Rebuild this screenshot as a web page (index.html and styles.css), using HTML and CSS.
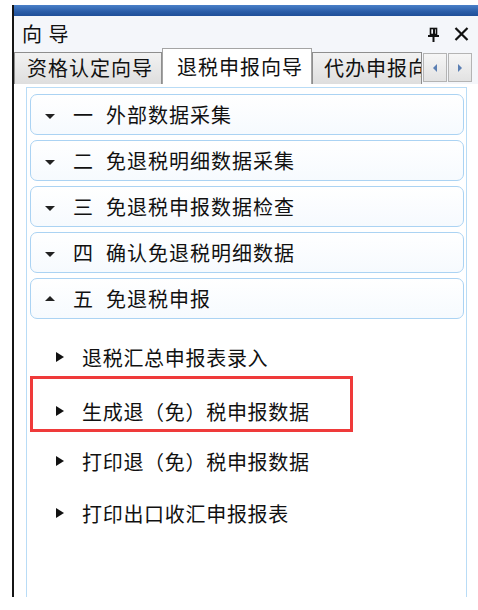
FILE: index.html
```html
<!DOCTYPE html>
<html lang="zh-CN">

<head>
    <meta charset="UTF-8">
    <title>向导</title>
    <link rel="stylesheet" href="styles.css">
</head>

<body>

    <div class="frame">
        <div class="titlebar"></div>

        <div class="header">
            <span class="title">向 导</span>
            <span class="tools">
                <svg class="pin" width="11" height="15" viewBox="0 0 11 15">
                    <rect x="2.5" y="1.5" width="6" height="6" fill="none" stroke="#111" stroke-width="1.6"/>
                    <rect x="5" y="2" width="2" height="5" fill="#111"/>
                    <rect x="0" y="8" width="11" height="2" fill="#111"/>
                    <rect x="4.5" y="10" width="2" height="5" fill="#111"/>
                </svg>
                <svg class="close" width="15" height="14" viewBox="0 0 15 14">
                    <path d="M1.5 1 L13.5 13 M13.5 1 L1.5 13" stroke="#111" stroke-width="2.2"/>
                </svg>
            </span>
        </div>

        <div class="tabs">
            <div class="tab">资格认定向导</div>
            <div class="tab active">退税申报向导</div>
            <div class="tab clipped">代办申报向导</div>
            <div class="scroll-btn"><span class="arrow left"></span></div>
            <div class="scroll-btn"><span class="arrow right"></span></div>
        </div>

        <div class="panel">
            <div class="panel-inner">
                <div class="group"><span class="caret down"></span><span class="num">一</span><span class="label">外部数据采集</span></div>
                <div class="group"><span class="caret down"></span><span class="num">二</span><span class="label">免退税明细数据采集</span></div>
                <div class="group"><span class="caret down"></span><span class="num">三</span><span class="label">免退税申报数据检查</span></div>
                <div class="group"><span class="caret down"></span><span class="num">四</span><span class="label">确认免退税明细数据</span></div>
                <div class="group"><span class="caret up"></span><span class="num">五</span><span class="label">免退税申报</span></div>

                <ul class="items">
                    <li class="item"><span class="bullet"></span>退税汇总申报表录入</li>
                    <li class="item marked"><span class="bullet"></span>生成退（免）税申报数据</li>
                    <li class="item"><span class="bullet"></span>打印退（免）税申报数据</li>
                    <li class="item"><span class="bullet"></span>打印出口收汇申报报表</li>
                </ul>
            </div>
        </div>
    </div>

</body>

</html>
```

FILE: styles.css
```css
body {
    margin: 0;
    padding-top: 5px;
    background-color: #fff;
    font-family: "Noto Sans CJK SC", "Noto Sans", sans-serif;
    color: #111;
    overflow: hidden;
}

.frame {
    margin-left: 12px;
    border-left: 2px solid #151515;
    height: 592px;
    display: flex;
    flex-direction: column;
}

.titlebar {
    height: 11px;
    background: linear-gradient(#4a80c8, #2a5da8 60%, #1f4f98);
}

.header {
    height: 32px;
    background-color: #f4f6fa;
    display: flex;
    align-items: center;
    justify-content: space-between;
    padding: 0 9px 0 8px;
}

.title {
    font-size: 20px;
    letter-spacing: 1px;
    line-height: 1;
    margin-top: 4px;
}

.tools {
    display: flex;
    align-items: center;
    gap: 15px;
    margin-top: 4px;
}

.tabs {
    height: 36px;
    background-color: #f4f6fa;
    display: flex;
    align-items: flex-end;
    font-size: 20px;
    letter-spacing: 1px;
}

.tab {
    box-sizing: border-box;
    height: 32px;
    width: 148px;
    padding-left: 12px;
    background: linear-gradient(#f2f2f2, #dedede);
    border: 1px solid #8e8e8e;
    border-bottom: none;
    line-height: 30px;
    white-space: nowrap;
    overflow: hidden;
}

.tab.active {
    height: 36px;
    width: 150px;
    padding-left: 14px;
    background: #fff;
    border-color: #a4a4a4;
    line-height: 36px;
}

/* the third tab is cut by the scroll buttons, as in the docked pane */
.tab.clipped {
    width: 110px;
    padding-left: 11px;
}

.scroll-btn {
    box-sizing: border-box;
    width: 24px;
    height: 29px;
    margin: 0 0 2px 1px;
    background: linear-gradient(#f6f6f6, #e2e2e2);
    border: 1px solid #b4b4b4;
    display: flex;
    align-items: center;
    justify-content: center;
}

.arrow {
    width: 0;
    height: 0;
    border-top: 4px solid transparent;
    border-bottom: 4px solid transparent;
}

.arrow.left {
    border-right: 4px solid #5b7fb3;
}

.arrow.right {
    border-left: 4px solid #5b7fb3;
}

.panel {
    flex: 1;
    background-color: #fff;
    padding: 3px 11px 0 12px;
    display: flex;
}

.panel-inner {
    flex: 1;
    border: 1px solid #b9dcf6;
    border-bottom: none;
    padding: 6px 2px 0 3px;
}

.group {
    box-sizing: border-box;
    height: 41px;
    margin-bottom: 5px;
    border: 1px solid #abd3f3;
    border-radius: 7px;
    background: linear-gradient(#ffffff, #f6fafe);
    display: flex;
    align-items: center;
    padding-left: 14px;
    font-size: 20px;
    letter-spacing: 1px;
}

.caret {
    width: 0;
    height: 0;
    border-left: 5px solid transparent;
    border-right: 5px solid transparent;
    margin-right: 18px;
}

.caret.down {
    border-top: 5px solid #222;
    margin-top: 3px;
}

.caret.up {
    border-bottom: 5px solid #222;
    margin-bottom: 1px;
}

.num {
    margin-right: 12px;
}

.items {
    list-style: none;
    margin: 9px 0 0;
    padding: 0;
}

.item {
    box-sizing: border-box;
    width: 323px;
    height: 52px;
    border: 3px solid transparent;
    display: flex;
    align-items: center;
    padding: 6px 0 0 23px;
    font-size: 20px;
    letter-spacing: 0.7px;
}

.item.marked {
    height: 56px;
    margin-top: -4px;
    padding-top: 14px;
    border-color: #ef3a3a;
}

.bullet {
    width: 0;
    height: 0;
    border-top: 5px solid transparent;
    border-bottom: 5px solid transparent;
    border-left: 8px solid #111;
    margin-right: 18px;
}
```
